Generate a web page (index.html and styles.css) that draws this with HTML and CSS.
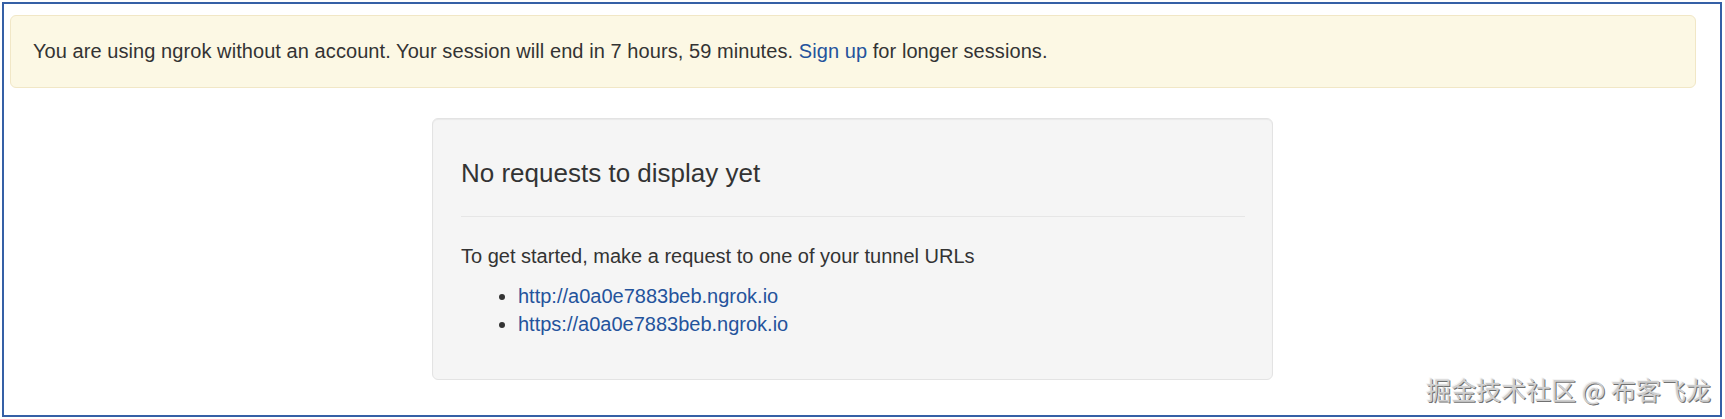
FILE: index.html
```html
<!DOCTYPE html>
<html lang="en">
<head>
<meta charset="utf-8">
<title>ngrok - Inspect</title>
<link rel="stylesheet" href="styles.css">
</head>
<body>
<div class="frame">
  <div class="alert">You are using ngrok without an account. Your session will end in 7 hours, 59 minutes. <a href="#">Sign up</a> for longer sessions.</div>
  <div class="well">
    <h4 class="well-title">No requests to display yet</h4>
    <hr class="divider">
    <p class="lead-text">To get started, make a request to one of your tunnel URLs</p>
    <ul class="tunnels">
      <li><a href="#">http://a0a0e7883beb.ngrok.io</a></li>
      <li><a href="#">https://a0a0e7883beb.ngrok.io</a></li>
    </ul>
  </div>
  <div class="watermark">掘金技术社区 @ 布客飞龙</div>
</div>
</body>
</html>
```
FILE: styles.css
```css
html, body {
  margin: 0;
  padding: 0;
  background: #ffffff;
}
body {
  font-family: "Liberation Sans", Arial, sans-serif;
  font-size: 20px;
  line-height: 1.42857;
  color: #333333;
}
a {
  color: #24539c;
  text-decoration: none;
}
.frame {
  position: relative;
  box-sizing: border-box;
  margin: 2px 0 0 2px;
  width: 1720px;
  height: 415px;
  border: 2px solid #3560a6;
  padding: 11px 0 0 6px;
}
.alert {
  box-sizing: border-box;
  width: 1686px;
  padding: 21px 21px 21px 22px;
  border: 1px solid #f1e7c6;
  border-radius: 6px;
  background: #fcf8e4;
  color: #333333;
  letter-spacing: 0.07px;
}
.well {
  box-sizing: border-box;
  width: 841px;
  margin: 30px 0 0 422px;
  padding: 27px 27px 27px 28px;
  background: #f5f5f5;
  border: 1px solid #e3e3e3;
  border-radius: 6px;
  box-shadow: inset 0 1px 1px rgba(0,0,0,0.05);
}
.well-title {
  margin: 13px 0 0;
  font-size: 26px;
  font-weight: 500;
  line-height: 1.1;
  color: #333333;
}
.divider {
  margin: 29px 0 25px;
  border: 0;
  border-top: 1px solid #e6e6e6;
  height: 0;
}
.lead-text {
  margin: 0 0 11px;
}
.tunnels {
  margin: 0 0 13px;
  padding-left: 57px;
}
.watermark {
  position: absolute;
  right: 9px;
  bottom: 13px;
  font-family: "Noto Sans CJK SC", "Liberation Sans", sans-serif;
  font-size: 25px;
  font-weight: 400;
  line-height: 1;
  color: #cfcfcf;
  text-shadow: 1px 1px 0 #707070, -1px -1px 0 #f4f4f4;
}
```
